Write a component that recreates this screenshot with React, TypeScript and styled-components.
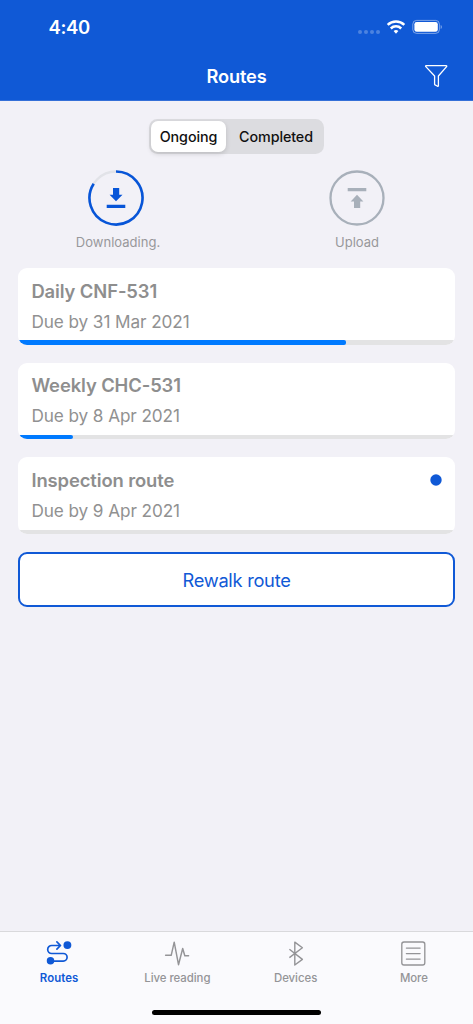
import React, { useState } from "react";
import styled, { createGlobalStyle } from "styled-components";

const Global = createGlobalStyle`
  * { box-sizing: border-box; }
  body { margin: 0; background: #f2f1f7; font-family: Inter, "Liberation Sans", sans-serif; }
  button { font-family: inherit; border: 0; margin: 0; padding: 0; background: none; }
  svg { display: block; }
`;

const Screen = styled.div`
  width: 473px;
  height: 1024px;
  display: flex;
  flex-direction: column;
  overflow: hidden;
  background: #f2f1f7;
`;

const Header = styled.header`
  height: 101px;
  flex: none;
  background: #1059d6;
  border-bottom: 1px solid #3570d8;
  color: #fff;
`;

const StatusBar = styled.div`
  height: 54px;
  padding: 0 30px 0 48.5px;
  display: flex;
  align-items: center;
  justify-content: space-between;
`;

const Clock = styled.span`
  font-size: 18.5px;
  font-weight: 600;
  line-height: 24px;
  letter-spacing: -0.35px;
`;

const NavBar = styled.div`
  height: 44px;
  padding: 0 25px;
  display: grid;
  grid-template-columns: 24px 1fr 24px;
  align-items: center;
`;

const Title = styled.h1`
  margin: 0;
  font-size: 18.2px;
  font-weight: 600;
  line-height: 24px;
  letter-spacing: -0.1px;
  text-align: center;
`;

const Main = styled.main`
  flex: 1;
  padding: 18px 18px 0;
  display: flex;
  flex-direction: column;
`;

const Segments = styled.div`
  width: 175px;
  height: 35px;
  padding: 2px;
  margin-left: 131px;
  display: flex;
  justify-content: space-between;
  border-radius: 8.5px;
  background: #dcdce0;
`;

const Segment = styled.button<{ $active: boolean; $width: number }>`
  width: ${(p) => p.$width}px;
  height: 31px;
  border-radius: 7px;
  color: #101010;
  font-size: 14.3px;
  font-weight: 500;
  letter-spacing: -0.08px;
  background: ${(p) => (p.$active ? "#fff" : "transparent")};
  box-shadow: ${(p) => (p.$active ? "0 2px 5px rgba(0,0,0,.14)" : "none")};
`;

const Transfers = styled.div`
  margin: 15px 0 17px;
  padding: 1px 18px 0;
  display: flex;
  justify-content: space-between;
`;

const Transfer = styled.div`
  width: 160px;
  display: flex;
  flex-direction: column;
  align-items: center;
  gap: 7px;
`;

const TransferLabel = styled.span<{ $nudge?: number }>`
  padding-left: ${(p) => p.$nudge ?? 0}px;
  font-size: 13px;
  line-height: 18px;
  letter-spacing: 0.02px;
  color: #98989b;
`;

const RouteList = styled.div`
  display: flex;
  flex-direction: column;
  gap: 18px;
`;

const Card = styled.article`
  height: 76.7px;
  display: flex;
  flex-direction: column;
  justify-content: space-between;
  overflow: hidden;
  border-radius: 9px;
  background: #fff;
`;

const CardBody = styled.div`
  padding: 10.5px 13px 0 13.4px;
  display: flex;
  justify-content: space-between;
`;

const RouteName = styled.h2`
  margin: 0;
  font-size: 18.4px;
  font-weight: 600;
  line-height: 24px;
  letter-spacing: -0.1px;
  color: #8e8e8e;
`;

const DueDate = styled.p`
  margin: 7px 0 0;
  font-size: 17.2px;
  line-height: 23px;
  letter-spacing: -0.09px;
  color: #919191;
`;

const UnreadDot = styled.svg`
  width: 12px;
  height: 12px;
  margin-top: 6px;
  fill: #1059d6;
`;

const Track = styled.div`
  height: 4.5px;
  background: #e3e3e4;
`;

const Bar = styled.div`
  height: 100%;
  border-radius: 0 2px 2px 0;
  background: #007aff;
`;

const RewalkButton = styled.button`
  height: 55px;
  margin-top: 18px;
  border: 2px solid #1059d6;
  border-radius: 9px;
  background: #fff;
  color: #1059d6;
  font-size: 18.3px;
  letter-spacing: -0.28px;
`;

const Footer = styled.footer`
  height: 93px;
  flex: none;
  display: flex;
  flex-direction: column;
  align-items: center;
  justify-content: space-between;
  padding-bottom: 9px;
  border-top: 1px solid #d9d9dc;
  background: #fafafd;
`;

const Tabs = styled.nav`
  width: 100%;
  display: grid;
  grid-template-columns: repeat(4, 1fr);
`;

const Tab = styled.button<{ $active?: boolean }>`
  padding-top: 6px;
  display: flex;
  flex-direction: column;
  align-items: center;
  gap: 4px;
  color: ${(p) => (p.$active ? "#1059d6" : "#949497")};
  font-size: 11.4px;
  font-weight: ${(p) => (p.$active ? 600 : 500)};
  line-height: 16px;
  letter-spacing: ${(p) => (p.$active ? 0.1 : -0.04)}px;
`;

const HomeIndicator = styled.div`
  width: 169px;
  height: 5.5px;
  border-radius: 3px;
  background: #000;
`;

const StatusIcons = () => (
  <svg width="86" height="18" viewBox="357 18 86 18" fill="none">
    <g fill="#fff" opacity=".25">
      <circle cx="360" cy="32" r="2" />
      <circle cx="366" cy="32" r="2" />
      <circle cx="372" cy="32" r="2" />
      <circle cx="378" cy="32" r="2" />
    </g>
    <g stroke="#fff" strokeWidth="2.5">
      <path d="M387.7 24.9a11.9 11.9 0 0 1 16.6 0" />
      <path d="M390.8 28.5a7.4 7.4 0 0 1 10.4 0" />
    </g>
    <path d="M393.6 31.1a3.6 3.6 0 0 1 4.8 0L396 33.8Z" fill="#fff" />
    <rect x="412.8" y="20.4" width="26.6" height="13" rx="3.8" stroke="#fff" strokeOpacity=".45" />
    <rect x="414.4" y="22" width="23.4" height="9.8" rx="2.3" fill="#fff" />
    <path d="M440.7 25v4c1.5-.7 1.5-3.3 0-4Z" fill="#fff" fillOpacity=".5" />
  </svg>
);

const FilterIcon = () => (
  <svg width="24" height="24" viewBox="0 0 24 24" fill="none" stroke="#fff" strokeWidth="1.3" strokeLinejoin="round">
    <path d="M2.1 1.6h20.1c.6 0 .8.6.4 1L14.4 12v9.8c0 .5-.4.7-.8.5l-2.5-1.4c-.3-.2-.5-.4-.5-.7V12L1.8 2.6c-.4-.4-.2-1 .3-1Z" />
  </svg>
);

const DownloadIcon = () => (
  <svg width="56" height="56" viewBox="0 0 56 56" fill="none">
    <circle cx="28" cy="28" r="26.5" stroke="#e2e3e8" strokeWidth="2.4" />
    <path d="M28 1.5A26.5 26.5 0 1 1 5.7 13.7" stroke="#0755d8" strokeWidth="2.6" />
    <path d="M25 18h6.2v6.8h3.3L28 31.3l-6.4-6.5H25Zm-6.3 16.8h18.6v3.1H18.7Z" fill="#0755d8" />
  </svg>
);

const UploadIcon = () => (
  <svg width="56" height="56" viewBox="0 0 56 56" fill="none">
    <circle cx="28" cy="28" r="26.5" stroke="#a8b0ba" strokeWidth="2.3" />
    <path d="M18.7 18h18.6v3.2H18.7ZM28 24.7l6.4 6.7h-3.2V38H25v-6.6h-3.3Z" fill="#a8b0ba" />
  </svg>
);

const RoutesIcon = () => (
  <svg width="28" height="28" viewBox="0 0.5 28 28" fill="none" stroke="currentColor" strokeWidth="1.7" strokeLinecap="round" strokeLinejoin="round">
    <path d="M15 8H6.7a4 4 0 0 0 0 8h11.6a3.8 3.8 0 0 1 0 7.6H6M11.9 4.4 15.5 8l-3.6 3.7" />
    <circle cx="22.4" cy="7.6" r="3.1" fill="currentColor" />
    <circle cx="5.5" cy="23.3" r="2.9" fill="currentColor" />
  </svg>
);

const PulseIcon = () => (
  <svg width="28" height="28" viewBox="0 0 28 28" fill="none" stroke="currentColor" strokeWidth="1.45" strokeLinecap="round" strokeLinejoin="round">
    <path d="M2.6 17.3h5.6l3-13.1 4.3 22.5 4.2-16.2 2.1 7.2h3.8" />
  </svg>
);

const BluetoothIcon = () => (
  <svg width="28" height="28" viewBox="0.8 0.2 28 28" fill="none" stroke="currentColor" strokeWidth="1.4" strokeLinejoin="round">
    <path d="m8.2 11.5 13 10.1-7.6 5.6V4.3l7.6 5.6L8.2 19.8" />
  </svg>
);

const MoreIcon = () => (
  <svg width="28" height="28" viewBox="0.8 0 28 28" fill="none" stroke="currentColor" strokeWidth="1.35" strokeLinecap="round">
    <rect x="2.6" y="4" width="23" height="23" rx="2.2" />
    <path d="M7.2 10.1h13.7M7.2 15.6h13.7M7.2 21.1h13.7" />
  </svg>
);

const routes = [
  { name: "Daily CNF-531", due: "Due by 31 Mar 2021", progress: 75, unread: false },
  { name: "Weekly CHC-531", due: "Due by 8 Apr 2021", progress: 12.6, unread: false },
  { name: "Inspection route", due: "Due by 9 Apr 2021", progress: 0, unread: true },
];

export default function App() {
  const [tab, setTab] = useState("ongoing");
  return (
    <Screen>
      <Global />
      <Header>
        <StatusBar>
          <Clock>4:40</Clock>
          <StatusIcons />
        </StatusBar>
        <NavBar>
          <span />
          <Title>Routes</Title>
          <FilterIcon />
        </NavBar>
      </Header>
      <Main>
        <Segments>
          <Segment $active={tab === "ongoing"} $width={75} onClick={() => setTab("ongoing")}>Ongoing</Segment>
          <Segment $active={tab === "completed"} $width={92} onClick={() => setTab("completed")}>Completed</Segment>
        </Segments>
        <Transfers>
          <Transfer>
            <DownloadIcon />
            <TransferLabel $nudge={4}>Downloading.</TransferLabel>
          </Transfer>
          <Transfer>
            <UploadIcon />
            <TransferLabel>Upload</TransferLabel>
          </Transfer>
        </Transfers>
        <RouteList>
          {routes.map((r) => (
            <Card key={r.name}>
              <CardBody>
                <div>
                  <RouteName>{r.name}</RouteName>
                  <DueDate>{r.due}</DueDate>
                </div>
                {r.unread && (
                  <UnreadDot viewBox="0 0 12 12">
                    <circle cx="6" cy="6" r="5.7" />
                  </UnreadDot>
                )}
              </CardBody>
              <Track>
                <Bar style={{ width: `${r.progress}%` }} />
              </Track>
            </Card>
          ))}
        </RouteList>
        <RewalkButton>Rewalk route</RewalkButton>
      </Main>
      <Footer>
        <Tabs>
          <Tab $active><RoutesIcon />Routes</Tab>
          <Tab><PulseIcon />Live reading</Tab>
          <Tab><BluetoothIcon />Devices</Tab>
          <Tab><MoreIcon />More</Tab>
        </Tabs>
        <HomeIndicator />
      </Footer>
    </Screen>
  );
}
